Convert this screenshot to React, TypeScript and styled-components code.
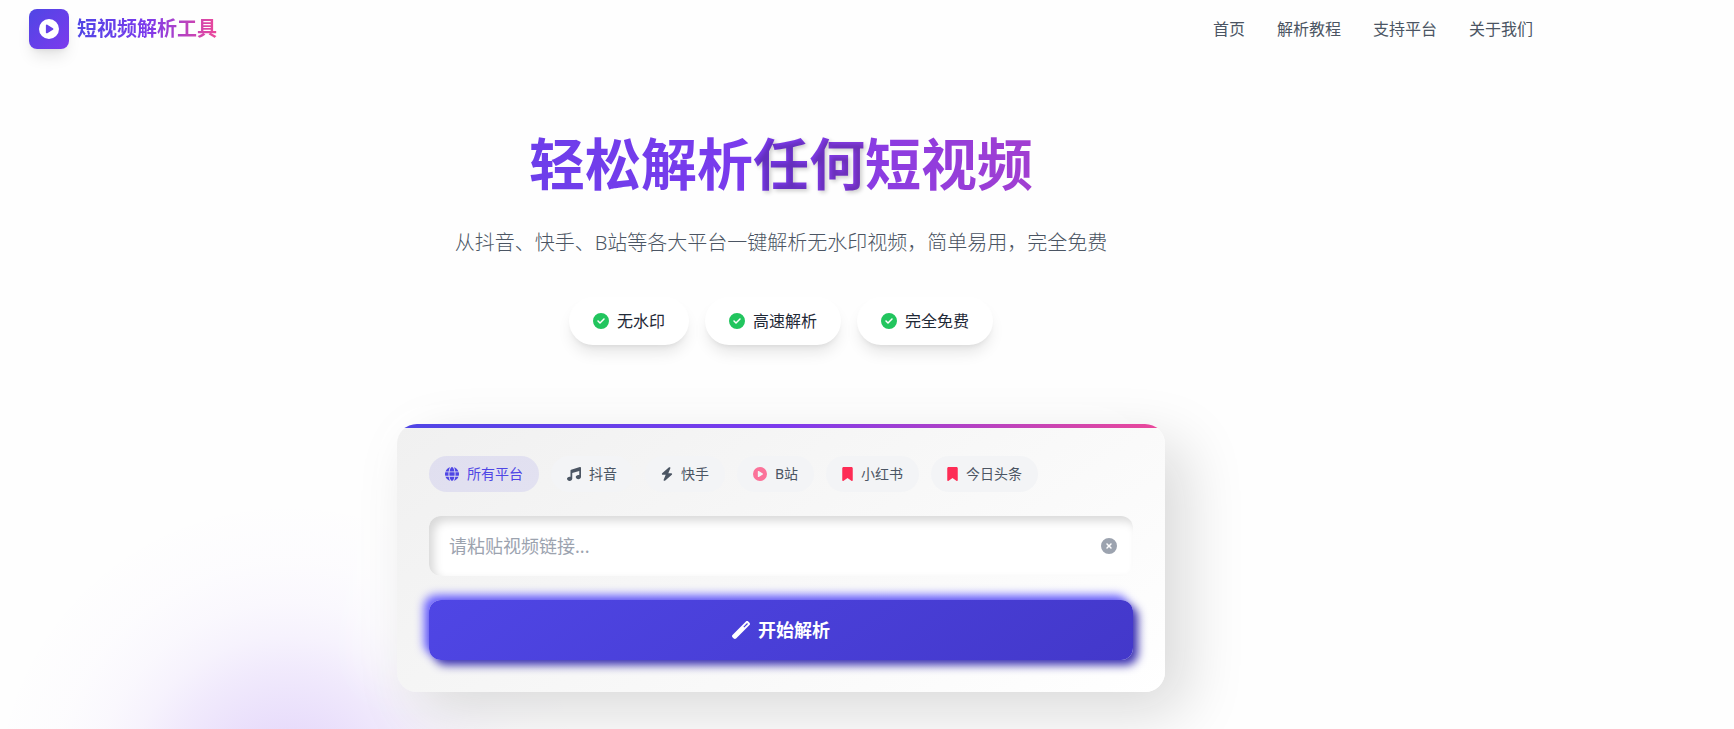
import React, { useState } from "react";
import styled, { createGlobalStyle } from "styled-components";
import {
  FaBolt,
  FaBookmark,
  FaCircleCheck,
  FaCirclePlay,
  FaCircleXmark,
  FaGlobe,
  FaMusic,
  FaWandMagic,
} from "react-icons/fa6";

const GlobalStyle = createGlobalStyle`
  *, *::before, *::after { box-sizing: border-box; }
  body {
    margin: 0;
    background: #fefefe;
    color: #1f2937;
    font-family: "Noto Sans", "Noto Sans CJK SC", sans-serif;
    font-size: 16px;
    line-height: 24px;
  }
  button, input { font: inherit; }
`;

const brandGradient = "#4f46e5, #7c3aed, #ec4899";

const Page = styled.div`
  position: relative;
  min-height: 100vh;
  overflow: hidden;
`;

const Glow = styled.div`
  position: absolute;
  left: -12px;
  top: 498px;
  width: 600px;
  height: 600px;
  border-radius: 50%;
  background: radial-gradient(
    closest-side,
    rgba(124, 58, 237, 0.2),
    rgba(124, 58, 237, 0.17) 23%,
    rgba(124, 58, 237, 0.1) 43%,
    rgba(124, 58, 237, 0.06) 54%,
    rgba(124, 58, 237, 0.03) 65%,
    rgba(124, 58, 237, 0.01) 79%,
    rgba(124, 58, 237, 0) 100%
  );
  pointer-events: none;
`;

const Shell = styled.div`
  position: relative;
  width: 100%;
  max-width: 1562px;
`;

const Container = styled.div`
  width: 100%;
  max-width: 1536px;
  margin: 0 auto;
  padding: 0 16px;
`;

const Bar = styled(Container)`
  display: flex;
  align-items: center;
  justify-content: space-between;
  height: 58px;
`;

const Brand = styled.a`
  display: flex;
  align-items: center;
  gap: 8px;
  text-decoration: none;
`;

const BrandMark = styled.span`
  display: grid;
  place-items: center;
  width: 40px;
  height: 40px;
  border-radius: 8px;
  background: linear-gradient(135deg, #4f46e5, #7c3aed);
  box-shadow: 0 10px 15px -3px rgba(0, 0, 0, 0.1), 0 4px 6px -4px rgba(0, 0, 0, 0.1);
  color: #fff;
  font-size: 20px;
  svg { display: block; }
`;

const BrandName = styled.span`
  background: linear-gradient(90deg, ${brandGradient});
  background-clip: text;
  -webkit-background-clip: text;
  color: transparent;
  font-size: 20px;
  line-height: 28px;
  font-weight: 700;
`;

const Nav = styled.nav`
  display: flex;
  gap: 32px;
`;

const NavLink = styled.a`
  color: #4b5563;
  text-decoration: none;
`;

const Hero = styled(Container)`
  display: flex;
  flex-direction: column;
  align-items: center;
  padding-top: 69px;
  padding-bottom: 32px;
`;

const Title = styled.h1`
  align-self: stretch;
  margin: 0;
  background: linear-gradient(90deg, ${brandGradient});
  background-clip: text;
  -webkit-background-clip: text;
  color: transparent;
  font-size: 56px;
  line-height: 72px;
  font-weight: 700;
  text-align: center;
`;

const TitleAccent = styled.span`
  text-shadow: 2px 2px 4px rgba(0, 0, 0, 0.2);
`;

const Lead = styled.p`
  margin: 30px 0 40px;
  color: #4b5563;
  font-size: 20px;
  line-height: 28px;
  font-weight: 300;
`;

const Perks = styled.ul`
  display: flex;
  flex-wrap: wrap;
  justify-content: center;
  gap: 16px;
  margin: 0;
  padding: 0;
  list-style: none;
`;

const Perk = styled.li`
  display: flex;
  align-items: center;
  gap: 8px;
  padding: 12px 24px;
  border-radius: 24px;
  background: #fff;
  box-shadow: 0 10px 15px -3px rgba(0, 0, 0, 0.1), 0 4px 6px -4px rgba(0, 0, 0, 0.1);
  svg { color: #22c55e; }
`;

const Card = styled.form`
  position: relative;
  display: flex;
  flex-direction: column;
  gap: 24px;
  width: 100%;
  max-width: 768px;
  margin-top: 79px;
  padding: 32px;
  border-radius: 20px;
  background: linear-gradient(145deg, #f0f0f0, #ffffff);
  box-shadow: 20px 20px 60px #d9d9d9, -20px -20px 60px #ffffff;
`;

const CardClip = styled.div`
  position: absolute;
  inset: 0;
  overflow: hidden;
  border-radius: inherit;
  pointer-events: none;
  &::before {
    content: "";
    display: block;
    height: 4px;
    background: linear-gradient(90deg, ${brandGradient});
  }
`;

const Platforms = styled.div`
  display: flex;
  flex-wrap: wrap;
  gap: 12px;
`;

const PlatformButton = styled.button<{ $active: boolean }>`
  display: flex;
  align-items: center;
  gap: 8px;
  padding: 8px 16px;
  border: 0;
  border-radius: 18px;
  background: ${(p) => (p.$active ? "rgba(79, 70, 229, 0.1)" : "#f3f4f6")};
  color: ${(p) => (p.$active ? "#4f46e5" : "#4b5563")};
  font-size: 14px;
  line-height: 20px;
  cursor: pointer;
`;

const PlatformIcon = styled.span<{ $width: number; $color?: string }>`
  display: block;
  width: ${(p) => p.$width}px;
  color: ${(p) => p.$color ?? "inherit"};
  svg { display: block; width: 100%; height: 14px; }
`;

const Field = styled.div`
  display: flex;
  align-items: center;
  height: 60px;
  padding: 0 16px 0 20px;
  border-radius: 12px;
  background: #fff;
  box-shadow: inset 5px 5px 10px #d9d9d9, inset -5px -5px 10px #ffffff;
`;

const UrlInput = styled.input`
  flex: 1;
  min-width: 0;
  padding: 0;
  border: 0;
  outline: 0;
  background: transparent;
  color: #1f2937;
  font-size: 18px;
  line-height: 28px;
  &::placeholder { color: #9ca3af; opacity: 1; }
`;

const ClearButton = styled.button`
  display: block;
  padding: 0;
  border: 0;
  background: none;
  color: #9ca3af;
  cursor: pointer;
  svg { display: block; }
`;

const SubmitButton = styled.button`
  display: flex;
  align-items: center;
  justify-content: center;
  gap: 8px;
  height: 60px;
  border: 0;
  border-radius: 12px;
  background: linear-gradient(145deg, #4f46e5, #4338ca);
  box-shadow: 5px 5px 10px #3a30b0, -5px -5px 10px #6c63ff;
  color: #fff;
  font-size: 18px;
  line-height: 28px;
  font-weight: 700;
  cursor: pointer;
`;

const links = ["首页", "解析教程", "支持平台", "关于我们"];
const perks = ["无水印", "高速解析", "完全免费"];
const platforms = [
  { name: "所有平台", Icon: FaGlobe, width: 14 },
  { name: "抖音", Icon: FaMusic, width: 14 },
  { name: "快手", Icon: FaBolt, width: 12 },
  { name: "B站", Icon: FaCirclePlay, width: 14, color: "#fb7299" },
  { name: "小红书", Icon: FaBookmark, width: 11, color: "#fe2c55" },
  { name: "今日头条", Icon: FaBookmark, width: 11, color: "#fe2c55" },
];

export default function App() {
  const [platform, setPlatform] = useState("所有平台");
  const [url, setUrl] = useState("");

  return (
    <Page>
      <GlobalStyle />
      <Glow />
      <Shell>
        <header>
          <Bar>
            <Brand href="#">
              <BrandMark>
                <FaCirclePlay />
              </BrandMark>
              <BrandName>短视频解析工具</BrandName>
            </Brand>
            <Nav>
              {links.map((link) => (
                <NavLink key={link} href="#">
                  {link}
                </NavLink>
              ))}
            </Nav>
          </Bar>
        </header>
        <main>
          <Hero>
            <Title>
              轻松解析<TitleAccent>任何</TitleAccent>短视频
            </Title>
            <Lead>从抖音、快手、B站等各大平台一键解析无水印视频，简单易用，完全免费</Lead>
            <Perks>
              {perks.map((perk) => (
                <Perk key={perk}>
                  <FaCircleCheck />
                  {perk}
                </Perk>
              ))}
            </Perks>
            <Card onSubmit={(e) => e.preventDefault()}>
              <CardClip />
              <Platforms>
                {platforms.map(({ name, Icon, width, color }) => (
                  <PlatformButton
                    key={name}
                    type="button"
                    $active={name === platform}
                    aria-pressed={name === platform}
                    onClick={() => setPlatform(name)}
                  >
                    <PlatformIcon $width={width} $color={color}>
                      <Icon />
                    </PlatformIcon>
                    {name}
                  </PlatformButton>
                ))}
              </Platforms>
              <Field>
                <UrlInput
                  type="text"
                  aria-label="视频链接"
                  placeholder="请粘贴视频链接..."
                  value={url}
                  onChange={(e) => setUrl(e.target.value)}
                />
                <ClearButton type="button" aria-label="清空" onClick={() => setUrl("")}>
                  <FaCircleXmark />
                </ClearButton>
              </Field>
              <SubmitButton type="submit">
                <FaWandMagic />
                开始解析
              </SubmitButton>
            </Card>
          </Hero>
        </main>
      </Shell>
    </Page>
  );
}
